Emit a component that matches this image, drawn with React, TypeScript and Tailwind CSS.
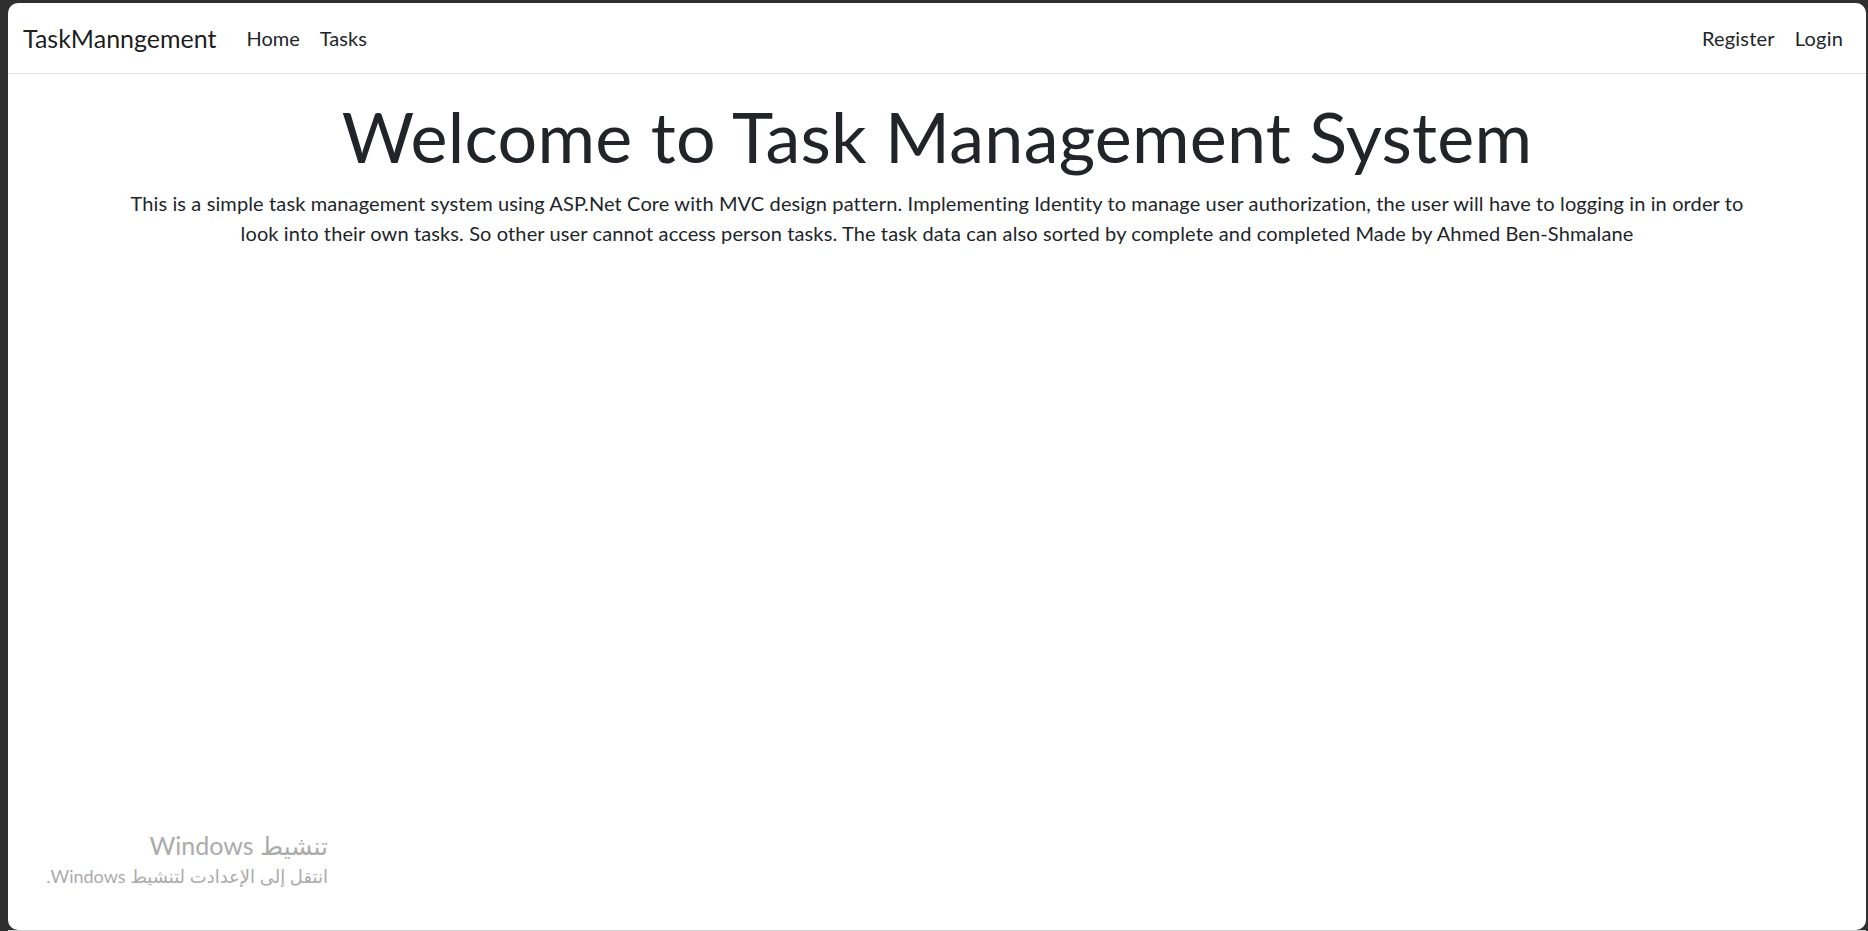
export default function App() {
  const font = { fontFamily: "Lato, 'DejaVu Sans', sans-serif" };
  return (
    <div className="h-[931px] w-full bg-[#2f2f2f] pl-[8px] pt-[3px] pr-[2px] flex flex-col" style={font}>
      <div className="relative flex-1 bg-white rounded-[10px] overflow-hidden flex flex-col text-[#212529]">
        <nav className="h-[71px] shrink-0 border-b border-[#dee2e6] flex items-center px-[15px]">
          <a className="text-[25px] leading-[37px] text-[rgba(0,0,0,0.9)] mr-[20px]">TaskManngement</a>
          <ul className="flex flex-1">
            <li><a className="block px-[10px] text-[20px] leading-[30px] text-[#212529]">Home</a></li>
            <li><a className="block px-[10px] text-[20px] leading-[30px] text-[#212529]">Tasks</a></li>
          </ul>
          <ul className="flex">
            <li><a className="block px-[10px] text-[20px] leading-[30px] text-[#212529] tracking-[0.2px]">Register</a></li>
            <li><a className="block pl-[10px] pr-[8px] text-[20px] leading-[30px] text-[#212529] tracking-[0.2px]">Login</a></li>
          </ul>
        </nav>
        <main className="mt-[20px] px-[15px] text-center">
          <h1 className="text-[70px] font-normal leading-[84px] tracking-[0.25px]">Welcome to Task Management System</h1>
          <p className="mt-[10px] text-[20px] leading-[30px] whitespace-nowrap tracking-[0.12px]">
            This is a simple task management system using ASP.Net Core with MVC design pattern. Implementing Identity to manage user authorization, the user will have to logging in in order to
            <br />
            look into their own tasks. So other user cannot access person tasks. The task data can also sorted by complete and completed Made by Ahmed Ben-Shmalane
          </p>
        </main>
        <div className="absolute left-0 top-[826px] w-[320px] text-right text-[#ababab]" dir="rtl">
          <div className="text-[25px] leading-[32px]" dir="rtl">تنشيط Windows</div>
          <div className="mt-[3px] text-[18px] leading-[24px]" dir="rtl">انتقل إلى الإعدادت لتنشيط Windows.</div>
        </div>
      </div>
      <div className="h-[1px] bg-[#d0d0d0]" />
    </div>
  );
}
